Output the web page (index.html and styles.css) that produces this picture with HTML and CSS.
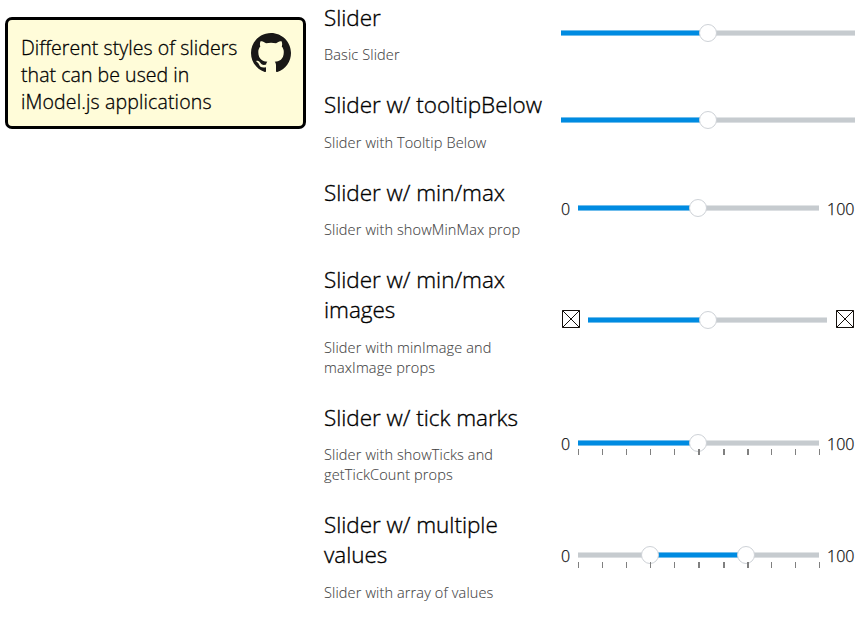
FILE: index.html
```
<!DOCTYPE html>
<html lang="en">
<head>
<meta charset="utf-8">
<title>Sliders</title>
<link rel="stylesheet" href="styles.css">
</head>
<body>
<main class="page">
  <aside class="card">
    <p class="card-text">Different styles of sliders<br>that can be used in<br><span class="loose">iModel.js applications</span></p>
    <svg class="github" viewBox="0 0 16 16"><path fill="#191717" d="M8 0C3.58 0 0 3.58 0 8c0 3.54 2.29 6.53 5.47 7.59.4.07.55-.17.55-.38 0-.19-.01-.82-.01-1.49-2.01.37-2.53-.49-2.69-.94-.09-.23-.48-.94-.82-1.13-.28-.15-.68-.52-.01-.53.63-.01 1.08.58 1.23.82.72 1.21 1.87.87 2.33.66.07-.52.28-.87.51-1.07-1.78-.2-3.64-.89-3.64-3.95 0-.87.31-1.59.82-2.15-.08-.2-.36-1.02.08-2.12 0 0 .67-.21 2.2.82.64-.18 1.32-.27 2-.27s1.36.09 2 .27c1.53-1.04 2.2-.82 2.2-.82.44 1.1.16 1.92.08 2.12.51.56.82 1.27.82 2.15 0 3.07-1.87 3.75-3.65 3.95.29.25.54.73.54 1.48 0 1.07-.01 1.93-.01 2.2 0 .21.15.46.55.38A8.01 8.01 0 0 0 16 8c0-4.42-3.58-8-8-8z"/></svg>
  </aside>
  <section class="samples">
    <div class="row">
      <div class="info"><h2>Slider</h2><p>Basic Slider</p></div>
      <div class="slider"><div class="rail"><div class="fill half"></div><i class="thumb at50"></i></div></div>
    </div>
    <div class="row">
      <div class="info"><h2>Slider w/ tooltipBelow</h2><p>Slider with Tooltip Below</p></div>
      <div class="slider"><div class="rail"><div class="fill half"></div><i class="thumb at50"></i></div></div>
    </div>
    <div class="row">
      <div class="info"><h2>Slider w/ min/max</h2><p>Slider with showMinMax prop</p></div>
      <div class="slider"><span class="min">0</span><div class="rail"><div class="fill half"></div><i class="thumb at50"></i></div><span class="max">100</span></div>
    </div>
    <div class="row">
      <div class="info"><h2>Slider w/ min/max<br>images</h2><p>Slider with minImage and<br>maxImage props</p></div>
      <div class="slider images"><svg class="box box-min" viewBox="0 0 18 18"><path d="M.5.5h17v17H.5zM.5.5l17 17M17.5.5l-17 17"/></svg><div class="rail"><div class="fill half"></div><i class="thumb at50"></i></div><svg class="box box-max" viewBox="0 0 18 18"><path d="M.5.5h17v17H.5zM.5.5l17 17M17.5.5l-17 17"/></svg></div>
    </div>
    <div class="row">
      <div class="info"><h2>Slider w/ tick marks</h2><p>Slider with showTicks and<br>getTickCount props</p></div>
      <div class="slider ticked"><span class="min">0</span><div class="rail"><div class="fill half"></div><i class="thumb at50"></i><div class="ticks"><b></b><b></b><b></b><b></b><b></b><b class="wide"></b><b class="wide"></b><b class="wide"></b><b></b><b></b><b></b></div></div><span class="max">100</span></div>
    </div>
    <div class="row">
      <div class="info"><h2>Slider w/ multiple<br>values</h2><p>Slider with array of values</p></div>
      <div class="slider multi"><span class="min">0</span><div class="rail"><div class="fill middle"></div><i class="thumb at30"></i><i class="thumb at70"></i><div class="ticks"><b></b><b></b><b></b><b></b><b></b><b class="wide"></b><b class="wide"></b><b class="wide"></b><b></b><b></b><b></b></div></div><span class="max">100</span></div>
    </div>
  </section>
</main>
</body>
</html>
```
FILE: styles.css
```
* { box-sizing: border-box; }
body {
  margin: 0;
  background: #fff;
  color: #000;
  font-family: "Open Sans", "Noto Sans", sans-serif;
  overflow: hidden;
}
.page {
  display: grid;
  grid-template-columns: 301px 531px;
  column-gap: 18px;
  align-items: start;
  padding: 2.9px 0 0 5px;
}
.card {
  display: flex;
  justify-content: space-between;
  align-items: flex-start;
  height: 112px;
  margin-top: 14.1px;
  padding: 13px 12px 0 13px;
  border: 3px solid #000;
  border-radius: 7px;
  background: #fffcd9;
}
.card-text {
  margin: 1px 0 0;
  font-size: 19.5px;
  line-height: 27px;
  white-space: nowrap;
  font-weight: 300;
  letter-spacing: 0.05px;
  -webkit-text-stroke: 0.3px #000;
}
.loose { letter-spacing: 0.14px; }
.github { width: 40px; height: 40px; flex: none; }
.samples { display: flex; flex-direction: column; gap: 25.2px; }
.row {
  display: grid;
  grid-template-columns: 237px 294px;
  align-items: start;
}
h2 {
  margin: 0 0 12.3px;
  font-size: 22.5px;
  line-height: 30px;
  font-weight: 300;
  letter-spacing: -0.03px;
  white-space: nowrap;
  -webkit-text-stroke: 0.35px #000;
}
.info p {
  margin: 0;
  font-size: 14.5px;
  line-height: 20px;
  font-weight: 300;
  letter-spacing: 0.13px;
  color: #444;
  white-space: nowrap;
  -webkit-text-stroke: 0.1px #444;
}
.slider {
  display: flex;
  align-items: center;
  height: 18px;
  margin-top: 21px;
}
.slider.images { margin-top: 46px; }
.slider.ticked { margin-top: 31px; }
.slider.multi { margin-top: 35.6px; }
.rail {
  position: relative;
  flex: 1;
  height: 6px;
  background: #c6cbcf;
  border-top: 1px solid #e1e4e6;
  border-bottom: 1px solid #dcdfe2;
}
.fill {
  height: 6px;
  margin-top: -1px;
  background: #008be1;
  border-top: 1px solid #70bdec;
  border-bottom: 1px solid #70bdec;
}
.half { width: 50%; }
.middle { width: 40%; margin-left: 30%; }
.thumb {
  position: absolute;
  top: 50%;
  width: 18px;
  height: 18px;
  margin: -9px 0 0 -9.3px;
  border: 1px solid #ced2d7;
  border-radius: 50%;
  background: #fff;
}
.images .thumb { margin-left: -9px; }
.at30 { left: 30%; }
.at50 { left: 50%; }
.at70 { left: 70%; }
.min, .max {
  font-size: 16px;
  line-height: 18px;
  font-weight: 300;
  color: #111;
  padding-top: 2.4px;
  -webkit-text-stroke: 0.25px #111;
}
.multi .min, .multi .max { padding-top: 3px; }
.min { width: 17px; }
.max { width: 36px; padding-left: 8px; }
.box { width: 18px; height: 18px; flex: none; fill: none; stroke: #15100c; }
.box-min { margin: -2px 8px 0 1px; }
.box-max { margin: -2px 1px 0 9px; }
.ticks {
  position: absolute;
  top: 8px;
  left: 0;
  right: -1px;
  display: flex;
  justify-content: space-between;
}
.multi .ticks { top: 9px; }
.ticks b { width: 1px; height: 6px; background: #808080; }
.ticks .wide { width: 2px; margin-right: -1px; }
```
